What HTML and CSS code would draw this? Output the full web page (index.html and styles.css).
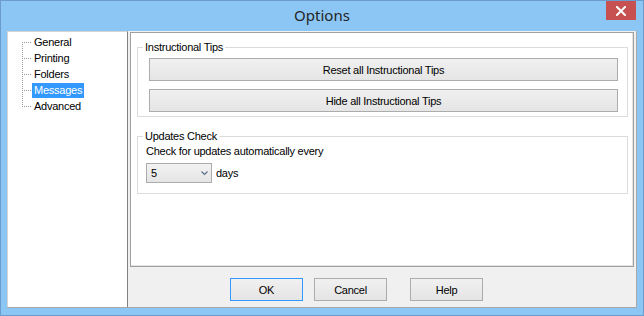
FILE: index.html
```html
<!DOCTYPE html>
<html lang="en">
<head>
    <meta charset="UTF-8">
    <title>Options</title>
    <link rel="stylesheet" href="styles.css">
</head>
<body>
    <div class="window">
        <div class="titlebar">
            <span></span>
            <div class="title">Options</div>
            <button class="close-btn" title="Close">
                <svg width="10" height="10" viewBox="0 0 10 10">
                    <path d="M1 1 L9 9 M9 1 L1 9" stroke="#fff" stroke-width="2" stroke-linecap="square"/>
                </svg>
            </button>
        </div>

        <div class="client">
            <ul class="tree">
                <li class="first"><span class="branch"></span><span class="node">General</span></li>
                <li><span class="branch"></span><span class="node">Printing</span></li>
                <li><span class="branch"></span><span class="node">Folders</span></li>
                <li><span class="branch"></span><span class="node selected">Messages</span></li>
                <li class="last"><span class="branch"></span><span class="node">Advanced</span></li>
            </ul>

            <div class="main">
                <div class="panel">
                    <fieldset class="group tips">
                        <legend>Instructional Tips</legend>
                        <button class="btn wide">Reset all Instructional Tips</button>
                        <button class="btn wide">Hide all Instructional Tips</button>
                    </fieldset>

                    <fieldset class="group updates">
                        <legend>Updates Check</legend>
                        <div class="line">Check for updates automatically every</div>
                        <div class="interval">
                            <div class="dropdown">
                                <span>5</span>
                                <svg width="7" height="5" viewBox="0 0 7 5">
                                    <path d="M0.5 0.5 L3.5 3.5 L6.5 0.5" fill="none" stroke="#5a6f8a" stroke-width="1.2"/>
                                </svg>
                            </div>
                            <span class="unit">days</span>
                        </div>
                    </fieldset>
                </div>

                <div class="footer">
                    <button class="btn dlg default">OK</button>
                    <button class="btn dlg cancel">Cancel</button>
                    <button class="btn dlg help">Help</button>
                </div>
            </div>
        </div>
    </div>
</body>
</html>
```

FILE: styles.css
```css
body {
    margin: 0;
    font-family: 'Liberation Sans', Arial, sans-serif;
    font-size: 11px;
    color: #000;
}

.window {
    width: 644px;
    height: 316px;
    box-sizing: border-box;
    border: 1px solid #6c9ccd;
    background-color: #8cc6f5;
    padding: 0 6px 7px 6px;
    display: flex;
    flex-direction: column;
}

/* title bar */
.titlebar {
    height: 30px;
    flex: none;
    display: grid;
    grid-template-columns: 1fr auto 1fr;
}

.title {
    font-family: 'Noto Sans', 'Open Sans', sans-serif;
    font-size: 15px;
    color: #252525;
    line-height: 30px;
    margin-top: -1px;
}

.close-btn {
    justify-self: end;
    align-self: start;
    width: 30px;
    height: 19px;
    margin-right: 1px;
    padding: 0;
    border: none;
    background-color: #c75050;
    display: flex;
    align-items: center;
    justify-content: center;
    cursor: pointer;
}

/* client area */
.client {
    flex: 1;
    display: flex;
    background-color: #f0f0f0;
    border-right: 1px solid #a8a8a8;
    border-bottom: 1px solid #a8a8a8;
}

.tree {
    width: 121px;
    box-sizing: border-box;
    margin: 0;
    padding: 2px 0 0 14px;
    list-style: none;
    background-color: #fff;
    border: 1px solid #d4d4d4;
    border-right: 1px solid #828282;
    border-bottom: none;
    letter-spacing: -0.25px;
}

.tree li {
    display: flex;
    align-items: center;
    height: 16px;
}

.branch {
    width: 10px;
    align-self: stretch;
    background:
        repeating-linear-gradient(to bottom, #9a9a9a 0 1px, transparent 1px 2px) left top / 1px 100% no-repeat,
        repeating-linear-gradient(to right, #9a9a9a 0 1px, transparent 1px 2px) left 8px / 9px 1px no-repeat;
}

.tree li.first .branch {
    background:
        repeating-linear-gradient(to bottom, #9a9a9a 0 1px, transparent 1px 2px) left 8px / 1px 8px no-repeat,
        repeating-linear-gradient(to right, #9a9a9a 0 1px, transparent 1px 2px) left 8px / 9px 1px no-repeat;
}

.tree li.last .branch {
    background:
        repeating-linear-gradient(to bottom, #9a9a9a 0 1px, transparent 1px 2px) left top / 1px 9px no-repeat,
        repeating-linear-gradient(to right, #9a9a9a 0 1px, transparent 1px 2px) left 8px / 9px 1px no-repeat;
}

.node {
    padding: 1px 2px;
    line-height: 13px;
}

.node.selected {
    background-color: #3399ff;
    color: #fff;
}

/* right side */
.main {
    flex: 1;
    display: flex;
    flex-direction: column;
    padding: 1px 2px 0 2px;
}

.panel {
    height: 235px;
    box-sizing: border-box;
    background-color: #fff;
    border: 1px solid #a0a0a0;
    box-shadow: inset -1px -1px 0 #e3e3e3;
    overflow: hidden;
}

.group {
    border: 1px solid #dcdcdc;
    min-width: 0;
}

.group legend {
    padding: 0 2px;
    line-height: 13px;
    letter-spacing: -0.25px;
}

.tips {
    margin: 8px 5px 0 6px;
    padding: 4px 9px 4px 11px;
    display: flex;
    flex-direction: column;
    gap: 8px;
}

.tips legend {
    margin-left: -6px;
}

.updates {
    margin: 13px 5px 0 6px;
    padding: 2px 9px 10px 8px;
}

.updates legend {
    margin-left: -3px;
}

.line {
    line-height: 13px;
    letter-spacing: -0.25px;
}

.interval {
    display: flex;
    align-items: center;
    margin-top: 5px;
}

.dropdown {
    width: 66px;
    height: 20px;
    box-sizing: border-box;
    border: 1px solid #acacac;
    background: linear-gradient(#f2f2f2, #e5e5e5);
    display: flex;
    align-items: center;
    justify-content: space-between;
    padding: 0 3px 0 4px;
}

.unit {
    margin-left: 4px;
    letter-spacing: -0.25px;
}

/* buttons */
.btn {
    font-family: 'Liberation Sans', Arial, sans-serif;
    font-size: 11px;
    letter-spacing: -0.25px;
    color: #000;
    height: 23px;
    box-sizing: border-box;
    border: 1px solid #acacac;
    background: linear-gradient(#f0f0f0, #e5e5e5);
    padding: 0;
    cursor: pointer;
}

.btn.wide {
    width: 100%;
}

.footer {
    flex: 1;
    display: flex;
    align-items: flex-start;
    padding: 11px 0 0 100px;
}

.btn.dlg {
    width: 73px;
}

.btn.default {
    border-color: #3399ff;
}

.btn.cancel {
    margin-left: 11px;
}

.btn.help {
    margin-left: 23px;
}
```
